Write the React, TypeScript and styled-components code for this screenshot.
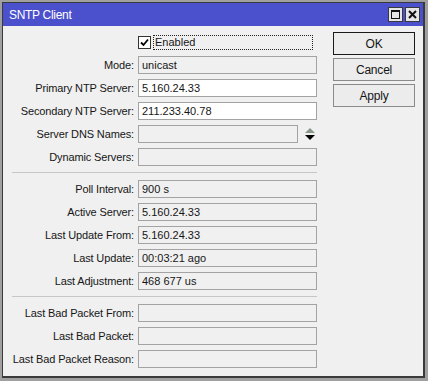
import React from 'react';
import styled, { createGlobalStyle } from 'styled-components';

const Global = createGlobalStyle`
  html, body { margin: 0; padding: 0; background: #a0a0a0; }
  body { font-family: "Liberation Sans", Arial, sans-serif; font-size: 11px; color: #161616; }
`;

const Window = styled.div`
  box-sizing: border-box;
  margin: 2px;
  width: 423px;
  height: 376px;
  border: 1px solid #3a3a3a;
  border-right-width: 2px;
  border-bottom-width: 2px;
  background: #f0f0f0;
  display: flex;
  flex-direction: column;
`;

const TitleBar = styled.div`
  height: 23px;
  flex: none;
  background: #4b50cc;
  display: flex;
  align-items: center;
  padding: 0 3px 0 6px;
  color: #ffffff;
`;

const Title = styled.div`
  flex: 1;
  font-size: 12px;
  letter-spacing: -0.3px;
`;

const TitleButtons = styled.div`
  display: flex;
  gap: 2px;
`;

const TitleButton = styled.div`
  box-sizing: border-box;
  width: 15px;
  height: 15px;
  background: #e6e6e6;
  border: 1px solid #3a3a3a;
  display: flex;
  align-items: center;
  justify-content: center;
`;

const Body = styled.div`
  display: flex;
  padding-top: 6px;
`;

const Form = styled.div`
  display: grid;
  grid-template-columns: 131px 179px;
  column-gap: 4px;
  row-gap: 5px;
  padding-top: 1px;
  align-content: start;
`;

const Label = styled.div`
  height: 18px;
  display: flex;
  align-items: center;
  justify-content: flex-end;
  white-space: nowrap;
  letter-spacing: -0.13px;
`;

const Field = styled.div<{ $editable?: boolean; $width?: number }>`
  box-sizing: border-box;
  height: 18px;
  width: ${(p) => (p.$width ? `${p.$width}px` : '100%')};
  border: 1px solid #a3a3a3;
  background: ${(p) => (p.$editable ? '#ffffff' : '#f0f0f0')};
  display: flex;
  align-items: center;
  padding-left: 3px;
  white-space: nowrap;
  overflow: hidden;
`;

const FieldRow = styled.div`
  display: flex;
  align-items: center;
  gap: 7px;
`;

const CheckRow = styled.div`
  height: 18px;
  display: flex;
  align-items: center;
  gap: 2px;
`;

const CheckBox = styled.div`
  box-sizing: border-box;
  width: 13px;
  height: 13px;
  border: 1px solid #333333;
  background: #ffffff;
  display: flex;
  align-items: center;
  justify-content: center;
`;

const FocusLabel = styled.div`
  box-sizing: border-box;
  height: 15px;
  flex: 1;
  margin-right: 4px;
  border: 1px dotted #222222;
  display: flex;
  align-items: center;
  padding-left: 1px;
`;

const Separator = styled.div`
  grid-column: 1 / -1;
  margin: 1px 0 2px 9px;
  height: 1px;
  background: #c6c6c6;
`;

const Buttons = styled.div`
  margin-left: 16px;
  display: flex;
  flex-direction: column;
  gap: 3px;
`;

const Button = styled.div<{ $default?: boolean }>`
  box-sizing: border-box;
  width: 82px;
  height: 23px;
  border: 1px solid ${(p) => (p.$default ? '#1a1a1a' : '#8a8a8a')};
  background: #ececec;
  display: flex;
  align-items: center;
  justify-content: center;
  font-size: 12px;
  letter-spacing: -0.2px;
`;

type Row = { label: string; value?: string; editable?: boolean; arrows?: boolean };

const section1: Row[] = [
  { label: 'Mode:', value: 'unicast' },
  { label: 'Primary NTP Server:', value: '5.160.24.33', editable: true },
  { label: 'Secondary NTP Server:', value: '211.233.40.78', editable: true },
  { label: 'Server DNS Names:', arrows: true },
  { label: 'Dynamic Servers:' },
];

const section2: Row[] = [
  { label: 'Poll Interval:', value: '900 s' },
  { label: 'Active Server:', value: '5.160.24.33' },
  { label: 'Last Update From:', value: '5.160.24.33' },
  { label: 'Last Update:', value: '00:03:21 ago' },
  { label: 'Last Adjustment:', value: '468 677 us' },
];

const section3: Row[] = [
  { label: 'Last Bad Packet From:' },
  { label: 'Last Bad Packet:' },
  { label: 'Last Bad Packet Reason:' },
];

const Arrows = () => (
  <svg width="10" height="12" viewBox="0 0 10 12">
    <polygon points="0,5 5,0 10,5" fill="#8a968a" />
    <polygon points="0,7 10,7 5,12" fill="#000000" />
  </svg>
);

const renderRows = (rows: Row[]) =>
  rows.map((r) => (
    <React.Fragment key={r.label}>
      <Label>{r.label}</Label>
      {r.arrows ? (
        <FieldRow>
          <Field $width={160} $editable={r.editable}>{r.value}</Field>
          <Arrows />
        </FieldRow>
      ) : (
        <Field $editable={r.editable}>{r.value}</Field>
      )}
    </React.Fragment>
  ));

export default function App() {
  return (
    <>
      <Global />
      <Window>
        <TitleBar>
          <Title>SNTP Client</Title>
          <TitleButtons>
            <TitleButton>
              <svg width="9" height="9" viewBox="0 0 9 9">
                <rect x="0.5" y="0.5" width="8" height="8" fill="none" stroke="#111" strokeWidth="1" />
                <rect x="0" y="0" width="9" height="2" fill="#111" />
              </svg>
            </TitleButton>
            <TitleButton>
              <svg width="9" height="9" viewBox="0 0 9 9">
                <path d="M1 1 L8 8 M8 1 L1 8" stroke="#111" strokeWidth="2" />
              </svg>
            </TitleButton>
          </TitleButtons>
        </TitleBar>
        <Body>
          <Form>
            <div />
            <CheckRow>
              <CheckBox>
                <svg width="9" height="9" viewBox="0 0 9 9">
                  <path d="M1 4.5 L3.5 7 L8 1.5" fill="none" stroke="#000" strokeWidth="1.8" />
                </svg>
              </CheckBox>
              <FocusLabel>Enabled</FocusLabel>
            </CheckRow>
            {renderRows(section1)}
            <Separator />
            {renderRows(section2)}
            <Separator />
            {renderRows(section3)}
          </Form>
          <Buttons>
            <Button $default>OK</Button>
            <Button>Cancel</Button>
            <Button>Apply</Button>
          </Buttons>
        </Body>
      </Window>
    </>
  );
}
